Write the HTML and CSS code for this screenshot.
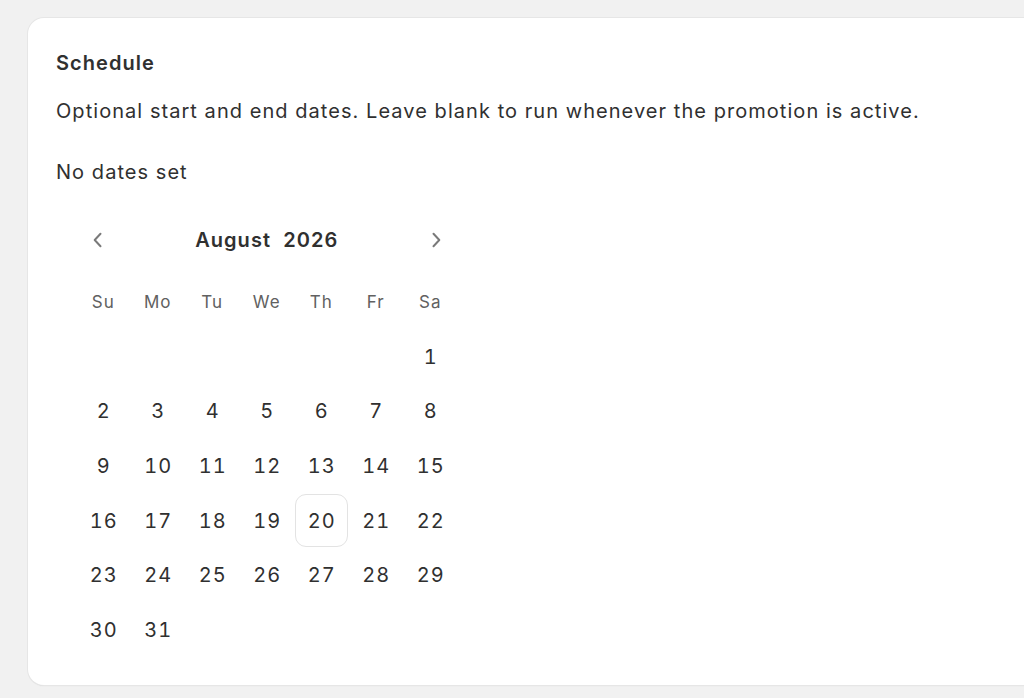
FILE: index.html
```html
<!DOCTYPE html>
<html lang="en">
<head>
  <meta charset="utf-8" />
  <title>Schedule</title>
  <meta name="viewport" content="width=device-width, initial-scale=1.0" />
  <link rel="stylesheet" href="styles.css">
</head>
<body>
  <div class="card">
    <h2 class="card-title">Schedule</h2>
    <p class="card-help">Optional start and end dates. Leave blank to run whenever the promotion is active.</p>
    <p class="card-status">No dates set</p>

    <div class="calendar">
      <div class="cal-nav">
        <button class="cal-arrow" title="Previous month">
          <svg width="20" height="20" viewBox="0 0 20 20"><path d="M12.5 3.8L6.7 10l5.8 6.2" fill="none" stroke="currentColor" stroke-width="2" stroke-linecap="round" stroke-linejoin="round"/></svg>
        </button>
        <div class="cal-title">August&nbsp; 2026</div>
        <button class="cal-arrow" title="Next month">
          <svg width="20" height="20" viewBox="0 0 20 20"><path d="M7.5 3.8l5.8 6.2-5.8 6.2" fill="none" stroke="currentColor" stroke-width="2" stroke-linecap="round" stroke-linejoin="round"/></svg>
        </button>
      </div>

      <div class="cal-grid">
        <div class="cal-wd">Su</div>
        <div class="cal-wd">Mo</div>
        <div class="cal-wd">Tu</div>
        <div class="cal-wd">We</div>
        <div class="cal-wd">Th</div>
        <div class="cal-wd">Fr</div>
        <div class="cal-wd">Sa</div>

        <div class="cal-day empty"></div>
        <div class="cal-day empty"></div>
        <div class="cal-day empty"></div>
        <div class="cal-day empty"></div>
        <div class="cal-day empty"></div>
        <div class="cal-day empty"></div>
        <div class="cal-day"><span>1</span></div>

        <div class="cal-day"><span>2</span></div>
        <div class="cal-day"><span>3</span></div>
        <div class="cal-day"><span>4</span></div>
        <div class="cal-day"><span>5</span></div>
        <div class="cal-day"><span>6</span></div>
        <div class="cal-day"><span>7</span></div>
        <div class="cal-day"><span>8</span></div>

        <div class="cal-day"><span>9</span></div>
        <div class="cal-day"><span>10</span></div>
        <div class="cal-day"><span>11</span></div>
        <div class="cal-day"><span>12</span></div>
        <div class="cal-day"><span>13</span></div>
        <div class="cal-day"><span>14</span></div>
        <div class="cal-day"><span>15</span></div>

        <div class="cal-day"><span>16</span></div>
        <div class="cal-day"><span>17</span></div>
        <div class="cal-day"><span>18</span></div>
        <div class="cal-day"><span>19</span></div>
        <div class="cal-day today"><span>20</span></div>
        <div class="cal-day"><span>21</span></div>
        <div class="cal-day"><span>22</span></div>

        <div class="cal-day"><span>23</span></div>
        <div class="cal-day"><span>24</span></div>
        <div class="cal-day"><span>25</span></div>
        <div class="cal-day"><span>26</span></div>
        <div class="cal-day"><span>27</span></div>
        <div class="cal-day"><span>28</span></div>
        <div class="cal-day"><span>29</span></div>

        <div class="cal-day"><span>30</span></div>
        <div class="cal-day"><span>31</span></div>
      </div>
    </div>
  </div>
</body>
</html>
```

FILE: styles.css
```css
html, body {
  margin: 0;
  padding: 0;
  height: 100%;
  overflow: hidden;
  background-color: #f1f1f1;
  font-family: "Inter", "Liberation Sans", sans-serif;
  color: #303030;
  letter-spacing: 1.05px;
}

.card {
  margin: 18px 0 0 28px;
  width: 1100px;
  box-sizing: border-box;
  padding: 30px 28px 28px 28px;
  background-color: #fff;
  border-radius: 16px;
  box-shadow: 0 0 0 1px #e6e6e6, 0 1px 1px #d2d2d2;
}

.card-title {
  margin: 0;
  font-size: 20px;
  line-height: 30px;
  font-weight: 600;
}

.card-help {
  margin: 18px 0 0 0;
  font-size: 20px;
  line-height: 30px;
}

.card-status {
  margin: 31px 0 0 0;
  font-size: 20px;
  line-height: 30px;
}

.calendar {
  margin: 26px 0 0 20px;
  width: 381.5px;
}

.cal-nav {
  display: flex;
  align-items: center;
  justify-content: space-between;
  height: 54px;
}

.cal-arrow {
  width: 44px;
  height: 44px;
  border: none;
  background: none;
  padding: 0;
  color: #7a7a7a;
  display: flex;
  align-items: center;
  justify-content: center;
  cursor: pointer;
}

.cal-title {
  font-size: 20px;
  font-weight: 600;
  color: #303030;
}

.cal-grid {
  margin-top: 8px;
  display: grid;
  grid-template-columns: repeat(7, 54.5px);
  grid-auto-rows: 54.6px;
}

.cal-wd {
  display: flex;
  align-items: center;
  justify-content: center;
  font-size: 17px;
  color: #616161;
}

.cal-day {
  display: flex;
  align-items: center;
  justify-content: center;
  font-size: 20px;
  color: #303030;
  font-variant-numeric: tabular-nums;
}

.cal-day span {
  width: 53px;
  height: 53px;
  box-sizing: border-box;
  display: flex;
  align-items: center;
  justify-content: center;
  border-radius: 11px;
  padding-left: 1px;
}

.cal-day.today span {
  border: 1px solid #e3e3e3;
}
```
